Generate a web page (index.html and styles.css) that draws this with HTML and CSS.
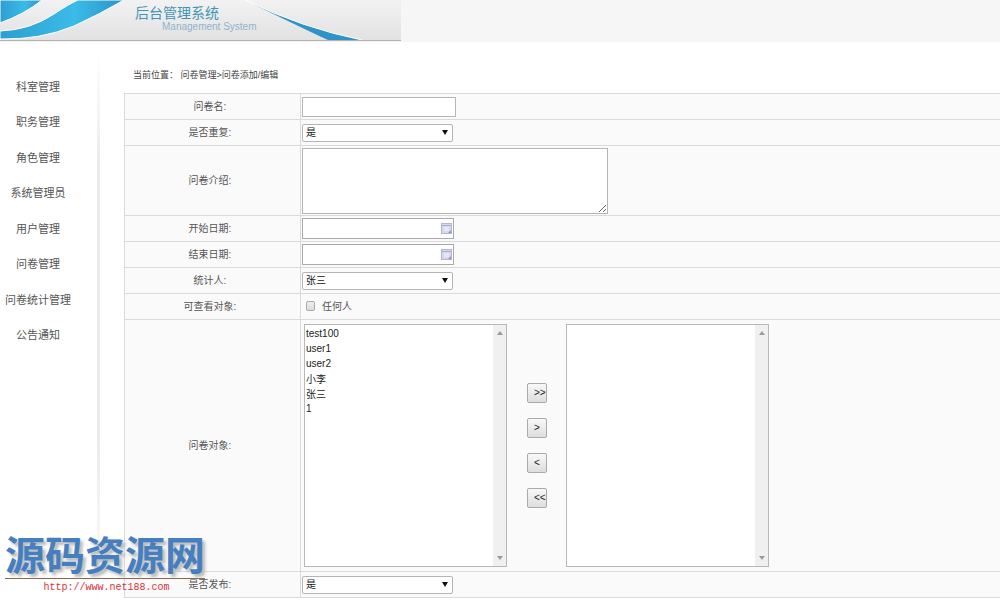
FILE: index.html
```html
<!DOCTYPE html>
<html lang="zh-CN">
<head>
<meta charset="utf-8">
<title>后台管理系统</title>
<link rel="stylesheet" href="styles.css">
</head>
<body>
<header class="top">
  <div class="brand">
    <svg class="waves" viewBox="0 0 401 40" preserveAspectRatio="none" aria-hidden="true">
      <defs>
        <linearGradient id="blue" x1="0" y1="0" x2="1" y2="0"><stop offset="0" stop-color="#2b9fd0"/><stop offset=".6" stop-color="#3bbbe8"/><stop offset="1" stop-color="#2c93c8"/></linearGradient>
      </defs>
      <path d="M0 0H42Q25 14 0 23Z" fill="url(#blue)" stroke="#fff"/>
      <path d="M0 31Q30 30 54 14Q69 4 78 0H124Q100 14 74 26Q40 40 0 39Z" fill="url(#blue)" stroke="#fff"/>
      <path d="M245 0Q302 28 362 40H328Q300 27 245 0Z" fill="#2f93c8"/>
      <path d="M245 0Q302 28 362 40" fill="none" stroke="#fff"/>
    </svg>
    <h1 class="title">后台管理系统</h1>
    <p class="subtitle">Management System</p>
  </div>
</header>
<div class="layout">
  <nav class="side">
    <ul class="menu">
      <li><a href="#">科室管理</a></li>
      <li><a href="#">职务管理</a></li>
      <li><a href="#">角色管理</a></li>
      <li><a href="#">系统管理员</a></li>
      <li><a href="#">用户管理</a></li>
      <li><a href="#">问卷管理</a></li>
      <li><a href="#">问卷统计管理</a></li>
      <li><a href="#">公告通知</a></li>
    </ul>
  </nav>
  <main class="main">
    <p class="crumb">当前位置：&nbsp;问卷管理&gt;问卷添加/编辑</p>
    <form>
    <table class="form">
      <tr><th><label for="name">问卷名:</label></th><td><input class="field name" id="name" type="text"></td></tr>
      <tr><th><label for="repeat">是否重复:</label></th><td><span class="pick"><select class="field" id="repeat"><option>是</option><option>否</option></select></span></td></tr>
      <tr class="tall"><th><label for="intro">问卷介绍:</label></th><td><textarea class="field intro" id="intro"></textarea></td></tr>
      <tr><th><label for="start">开始日期:</label></th><td><span class="date"><input class="field" id="start" type="text"><svg viewBox="0 0 11 11" aria-hidden="true"><rect x="0.5" y="0.5" width="10" height="10" fill="#d6d8ee" stroke="#b4b5d2"/><path d="M1 2.500H10" stroke="#a9acd0"/><path d="M3 5H8M3 7H8" stroke="#f4f5ff"/><path d="M7 10L10 7V10Z" fill="#8e96bd"/></svg></span></td></tr>
      <tr><th><label for="end">结束日期:</label></th><td><span class="date"><input class="field" id="end" type="text"><svg viewBox="0 0 11 11" aria-hidden="true"><rect x="0.5" y="0.5" width="10" height="10" fill="#d6d8ee" stroke="#b4b5d2"/><path d="M1 2.500H10" stroke="#a9acd0"/><path d="M3 5H8M3 7H8" stroke="#f4f5ff"/><path d="M7 10L10 7V10Z" fill="#8e96bd"/></svg></span></td></tr>
      <tr><th><label for="stat">统计人:</label></th><td><span class="pick"><select class="field" id="stat"><option>张三</option></select></span></td></tr>
      <tr><th>可查看对象:</th><td><label class="any"><input type="checkbox">任何人</label></td></tr>
      <tr class="targets"><th><label for="from">问卷对象:</label></th><td>
        <div class="transfer">
          <div class="list">
            <select id="from" size="16" multiple><option>test100</option><option>user1</option><option>user2</option><option>小李</option><option>张三</option><option>1</option></select>
            <span class="bar" aria-hidden="true"></span>
          </div>
          <div class="moves">
            <button type="button">&gt;&gt;</button>
            <button type="button">&gt;</button>
            <button type="button">&lt;</button>
            <button type="button">&lt;&lt;</button>
          </div>
          <div class="list">
            <select size="16" multiple aria-label="已选对象"></select>
            <span class="bar" aria-hidden="true"></span>
          </div>
        </div>
      </td></tr>
      <tr><th><label for="publish">是否发布:</label></th><td><span class="pick"><select class="field" id="publish"><option>是</option><option>否</option></select></span></td></tr>
    </table>
    </form>
  </main>
</div>
<div class="stamp">
  <div class="stamp-name">源码资源网</div>
  <div class="stamp-url">http://www.net188.com</div>
</div>
</body>
</html>
```
FILE: styles.css
```css
* { box-sizing: border-box; }
body {
  margin: 0;
  background: #fff;
  color: #555;
  font: 10px/14px "Liberation Sans", "Noto Sans CJK SC", sans-serif;
}
h1, p, ul { margin: 0; padding: 0; }
.top { background: #f6f6f6; height: 42px; }
.brand {
  position: relative;
  width: 401px;
  height: 41px;
  border-bottom: 1px solid #b5b0b0;
  background: linear-gradient(#f2f2f2, #e2e2e2);
}
.waves { position: absolute; inset: 0; width: 100%; height: 100%; }
.title {
  position: relative;
  padding: 4px 0 0 135px;
  font: 400 14px/17px "Noto Sans CJK SC", sans-serif;
  color: #4494b6;
}
.subtitle {
  position: relative;
  padding-left: 162px;
  font: 10px/12px "Noto Sans", "Liberation Sans", sans-serif;
  font-family: "Liberation Sans", sans-serif;
  color: #8fb4cc;
}
.layout { display: flex; }
.side {
  width: 100px;
  flex: none;
  padding: 27px 4px 0 0;
  background: linear-gradient(#fff0, #ebebeb 20%, #ebebeb 70%, #fff0) right 0 top 10px / 3px 100% no-repeat;
}
.menu { display: grid; grid-auto-rows: 1fr; height: 284px; list-style: none; }
.menu li { display: flex; align-items: center; justify-content: center; padding-right: 20px; }
.menu a { color: #555; text-decoration: none; white-space: nowrap; font-size: 11px; }
.main { flex: 1; padding-left: 24px; }
.crumb { padding: 26px 0 11px 9px; font-size: 9px; line-height: 14px; color: #444; }
.form { width: 100%; border-collapse: collapse; background: #fafafa; table-layout: fixed; }
.form th, .form td { height: 26px; padding: 0 0 0 1px; border: 1px solid #dadada; vertical-align: middle; }
.form td { border-right: 0; }
.form th { width: 176px; padding: 0 5px 0 0; font-weight: 400; text-align: center; }
.form .tall th, .form .tall td { height: 70px; }
.form .targets th, .form .targets td { height: 252px; }
.field {
  display: block;
  margin: 0;
  padding: 0 3px;
  border: 1px solid #b5b5b5;
  border-radius: 0;
  background: #fff;
  color: #111;
  font: inherit;
}
.name { width: 154px; height: 20px; }
.pick { position: relative; display: block; width: 151px; }
.pick .field { appearance: none; width: 100%; height: 18px; border-radius: 2px; }
.pick::after {
  content: "";
  position: absolute;
  right: 5px;
  top: 6px;
  border: solid transparent;
  border-width: 5px 3px 0;
  border-top-color: #111;
}
.intro { width: 306px; height: 66px; resize: both; }
.date { position: relative; display: block; width: 152px; }
.date .field { width: 100%; height: 21px; border-color: #aaa; }
.date svg { position: absolute; right: 2px; top: 5px; width: 11px; height: 11px; }
.any { display: flex; align-items: center; gap: 7px; padding-left: 4px; }
.any input {
  appearance: none;
  width: 9px;
  height: 10px;
  margin: 0 0 2px;
  border: 1px solid #aaa;
  border-radius: 2px;
  background: linear-gradient(#eee, #ddd);
}
.transfer { display: flex; align-items: center; padding-left: 2px; }
.list { display: flex; width: 203px; height: 243px; border: 1px solid #b8b8b8; background: #fff; }
.list select {
  flex: 1;
  min-width: 0;
  height: 100%;
  padding: 1px 0 0;
  border: 0;
  background: #fff;
  color: #222;
  font: inherit;
  overflow: hidden;
}
.list option { display: flex; align-items: center; height: 15px; min-height: 15px; padding: 0 1px; line-height: 15px; }
.bar { display: flex; flex-direction: column; justify-content: space-between; align-items: center; width: 13px; padding: 6px 0; background: #f0f0f0; }
.bar::before, .bar::after { content: ""; border: solid transparent; border-width: 0 3px 4px; border-bottom-color: #9a9a9a; }
.bar::after { border-width: 4px 3px 0; border-top-color: #9a9a9a; }
.moves { display: flex; flex-direction: column; gap: 15px; width: 59px; padding-left: 20px; }
.moves button {
  width: 20px;
  height: 20px;
  padding: 0 0 0 6px;
  overflow: hidden;
  border: 1px solid #aaa;
  border-radius: 2px;
  background: linear-gradient(#f8f8f8, #ddd);
  color: #222;
  font: inherit;
  text-align: left;
}
.stamp { position: absolute; left: 5px; top: 531px; width: 200px; }
.stamp-name {
  height: 48px;
  border-bottom: 1px solid #8a6546;
  font: 700 40px/44px "Noto Sans CJK SC", sans-serif;
  color: #467fc0;
  text-shadow: 3px 3px 3px #bbb;
  white-space: nowrap;
}
.stamp-url { padding: 2px 0 0 3px; text-align: center; font: 10px/14px "Liberation Mono", monospace; color: #d8303a; }
```
